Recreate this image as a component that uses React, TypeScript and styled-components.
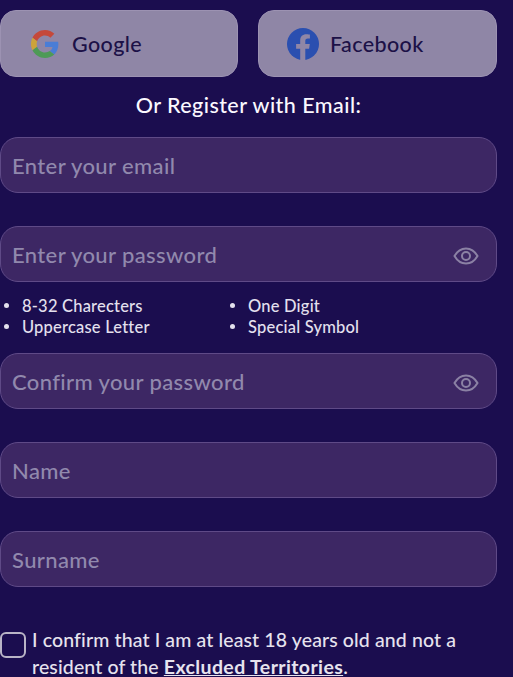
import React from "react";
import styled, { createGlobalStyle } from "styled-components";

const Global = createGlobalStyle`
  html, body { margin: 0; padding: 0; background: #1b0d4f; }
  body { font-family: "Lato", "Noto Sans", sans-serif; overflow: hidden; }
`;

const Page = styled.div`
  width: 513px;
  height: 677px;
  overflow: hidden;
  box-sizing: border-box;
  padding: 10px 16px 0 0;
  background: #1b0d4f;
  display: flex;
  flex-direction: column;
  & > * { flex: none; }
`;

const SocialRow = styled.div`
  display: grid;
  grid-template-columns: 238px 239px;
  column-gap: 20px;
`;

const SocialButton = styled.button<{ $gap: number; $pad: number }>`
  height: 67px;
  box-sizing: border-box;
  display: flex;
  align-items: center;
  gap: ${(p) => p.$gap}px;
  padding: 0 0 0 ${(p) => p.$pad}px;
  background: #8f86a6;
  border: 1px solid #9c92b2;
  border-radius: 16px;
  color: #1c1147;
  font-family: inherit;
  font-size: 21.5px;
  font-weight: 500;
  letter-spacing: 0.4px;
`;

const Heading = styled.h2`
  margin: 15px 0 17px;
  height: 28px;
  line-height: 27px;
  text-align: center;
  color: #fbf9ff;
  font-size: 21.5px;
  font-weight: 500;
  letter-spacing: 0.45px;
`;

const Field = styled.div<{ $after?: number }>`
  height: 56px;
  box-sizing: border-box;
  display: flex;
  align-items: center;
  justify-content: space-between;
  padding: 0 17px 0 11px;
  margin-bottom: ${(p) => p.$after ?? 33}px;
  background: #3d2764;
  border: 1px solid #5f4a87;
  border-radius: 18px;
`;

const Placeholder = styled.span`
  color: #9189ad;
  font-size: 22px;
  font-weight: 500;
  letter-spacing: 0.38px;
`;

const EyeSlot = styled.span`
  display: flex;
  padding-top: 4px;
`;

const Rules = styled.ul`
  display: grid;
  grid-template-columns: 226px 1fr;
  margin: -20px 0 16px;
  padding: 0 0 0 4px;
  list-style: none;
  height: 42px;
`;

const Rule = styled.li`
  display: flex;
  align-items: center;
  height: 21px;
  color: #e4e0ee;
  font-size: 16.5px;
  font-weight: 500;
  letter-spacing: 0.2px;
  &::before {
    content: "";
    width: 5px;
    height: 5px;
    margin-right: 13px;
    border-radius: 50%;
    background: #e4e0ee;
    flex: none;
  }
`;

const Consent = styled.div`
  display: flex;
  gap: 6px;
  margin-top: 6px;
`;

const Box = styled.span`
  flex: none;
  width: 26px;
  height: 26px;
  box-sizing: border-box;
  margin-top: 6px;
  border: 2px solid #b9b4c6;
  border-radius: 6px;
`;

const ConsentText = styled.p`
  margin: 0;
  color: #e6e3ee;
  font-size: 19.5px;
  font-weight: 500;
  line-height: 27px;
  letter-spacing: 0.12px;
  width: 470px;
`;

const TermsLink = styled.a`
  color: #e6e3ee;
  font-weight: 700;
  letter-spacing: 0.38px;
  text-decoration: underline;
`;

const GoogleIcon = () => (
  <svg width="28" height="28" viewBox="0 0 48 48" aria-hidden="true">
    <path fill="#c5483a" d="M24 9.500c3.500 0 6.700 1.200 9.200 3.600l6.800-6.800C35.900 2.400 30.400 0 24 0 14.600 0 6.500 5.400 2.600 13.200l7.900 6.200C12.400 13.700 17.700 9.500 24 9.500z" />
    <path fill="#4a7dd6" d="M46.900 24.500c0-1.600-.1-3.100-.4-4.500H24v9h12.900c-.6 3-2.200 5.500-4.800 7.200l7.700 6c4.500-4.200 7.100-10.300 7.100-17.700z" />
    <path fill="#cda33a" d="M10.500 28.600c-.5-1.400-.8-3-.8-4.600s.3-3.200.8-4.600l-7.900-6.200C.9 16.500 0 20.100 0 24s.9 7.500 2.600 10.800l7.900-6.200z" />
    <path fill="#4e9a56" d="M24 48c6.500 0 11.900-2.100 15.800-5.800l-7.700-6c-2.100 1.400-4.900 2.300-8.100 2.300-6.300 0-11.600-4.200-13.500-9.900l-7.900 6.200C6.500 42.600 14.600 48 24 48z" />
  </svg>
);

const FacebookIcon = () => (
  <svg width="32" height="32" viewBox="0 0 32 32" aria-hidden="true">
    <circle cx="16" cy="16" r="16" fill="#2a4fb0" />
    <path fill="#8f86a6" d="M18.300 32V20.700h3.800l.7-4.700h-4.500v-3c0-1.300.6-2.500 2.600-2.500h2v-4s-1.800-.3-3.600-.3c-3.700 0-6.100 2.200-6.100 6.300V16H9.100v4.700h4.100V32z" />
  </svg>
);

const EyeIcon = () => (
  <EyeSlot>
    <svg width="26" height="20" viewBox="0 0 26 20" fill="none" stroke="#8b81a4" aria-hidden="true">
      <path strokeWidth="2" d="M1.500 10C4.500 4.800 8.500 2.500 13 2.500S21.500 4.800 24.500 10C21.500 15.200 17.500 17.500 13 17.500S4.500 15.200 1.500 10z" />
      <circle cx="13" cy="10" r="4" strokeWidth="2" />
    </svg>
  </EyeSlot>
);

export default function App() {
  return (
    <Page>
      <Global />
      <SocialRow>
        <SocialButton $gap={13} $pad={30}>
          <GoogleIcon />
          Google
        </SocialButton>
        <SocialButton $gap={11} $pad={28}>
          <FacebookIcon />
          Facebook
        </SocialButton>
      </SocialRow>
      <Heading>Or Register with Email:</Heading>
      <Field>
        <Placeholder>Enter your email</Placeholder>
      </Field>
      <Field>
        <Placeholder>Enter your password</Placeholder>
        <EyeIcon />
      </Field>
      <Rules>
        <Rule>8-32 Charecters</Rule>
        <Rule>One Digit</Rule>
        <Rule>Uppercase Letter</Rule>
        <Rule>Special Symbol</Rule>
      </Rules>
      <Field>
        <Placeholder>Confirm your password</Placeholder>
        <EyeIcon />
      </Field>
      <Field>
        <Placeholder>Name</Placeholder>
      </Field>
      <Field>
        <Placeholder>Surname</Placeholder>
      </Field>
      <Consent>
        <Box />
        <ConsentText>
          I confirm that I am at least 18 years old and not a resident of the{" "}
          <TermsLink>Excluded Territories</TermsLink>.
        </ConsentText>
      </Consent>
    </Page>
  );
}
